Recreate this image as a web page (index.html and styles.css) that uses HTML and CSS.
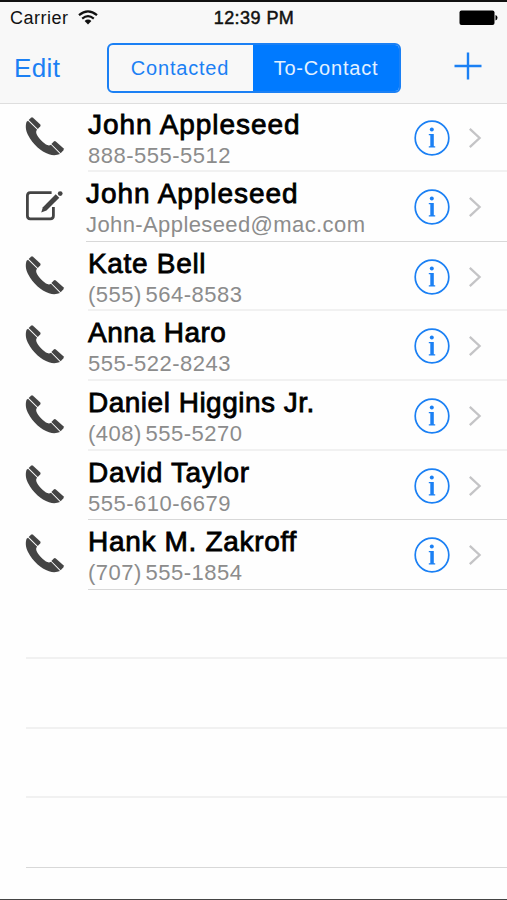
FILE: index.html
```html
<!DOCTYPE html>
<html lang="en">
<head>
<meta charset="utf-8">
<title>To-Contact</title>
<link rel="stylesheet" href="styles.css">
</head>
<body>
<svg width="0" height="0" class="defs" aria-hidden="true">
  <symbol id="phone" viewBox="0 0 40 40">
    <path d="M1.6 5.8C.4 9 .4 14 3 19C8 28.5 16 35.5 24 38.3C28 39.6 32 39.3 35 38L26 28.8C23.5 30.3 20.8 28.8 17.8 26.1C14.4 22.8 11.4 19.2 11.2 16.6C11.1 15 11.5 14.4 12.2 13.7L3 4.7Z"/>
    <path d="M3.7 3.9L6 1.7Q7 .9 8 1.7L15.3 8.4Q16 9.2 15.3 10.2L12.8 13Z"/>
    <path d="M26.4 28L28.8 25.4Q29.8 24.6 30.8 25.4L38.4 32.3Q39.2 33.3 38.4 34.3L35.7 37.2Z"/>
  </symbol>
  <symbol id="compose" viewBox="0 0 40 40">
    <path d="M26.6 7.6H5.2Q2.4 7.6 2.4 10.6V30.8Q2.4 33.8 5.2 33.8H25.4Q28.4 33.8 28.4 30.8V22" fill="none" stroke="#444" stroke-width="2.8"/>
    <path d="M17.9 22.2L30.7 9.2L34.3 12.8L21.5 25.6L16.2 27.6Z"/>
    <circle cx="35.2" cy="8.6" r="2.4"/>
  </symbol>
  <symbol id="info" viewBox="0 0 36 36">
    <circle cx="18" cy="18" r="16.8" fill="none" stroke="#1b80f4" stroke-width="1.7"/>
    <circle cx="17.8" cy="9.6" r="2" fill="#1b80f4"/>
    <path d="M14.8 14H19.8V26.2H21.2V27.4H14.8V26.2H16.3V15.3H14.8Z" fill="#1b80f4"/>
  </symbol>
  <symbol id="chevron" viewBox="0 0 14 22">
    <path d="M1.8 1.8L11.6 11L1.8 20.2" fill="none" stroke="#c4c4c6" stroke-width="2.3"/>
  </symbol>
</svg>
<div class="screen">
  <header class="top">
    <div class="status">
      <div class="carrier"><span>Carrier</span>
        <svg class="wifi" width="20" height="16" viewBox="0 0 20 16"><g fill="none" stroke="#111" stroke-width="2.2"><path d="M1 5.2Q10-2.6 19 5.2"/><path d="M4.2 8.6Q10 3.8 15.8 8.6"/></g><path d="M6.6 11Q10 8.2 13.4 11L10 14.6Z" fill="#111"/></svg>
      </div>
      <div class="time">12:39 PM</div>
      <svg class="battery" width="39" height="16" viewBox="0 0 39 16"><rect x=".5" y=".5" width="35" height="14.5" rx="2"/><path d="M36.5 5Q38.5 5.5 38.5 7.8T36.5 10.6Z"/></svg>
    </div>
    <nav class="nav">
      <span class="edit">Edit</span>
      <div class="segments"><span class="seg">Contacted</span><span class="seg active">To-Contact</span></div>
      <svg class="plus" width="28" height="28" viewBox="0 0 28 28"><path d="M14 .5V27.5M.5 14H27.5" stroke="#1b80f4" stroke-width="2.4"/></svg>
    </nav>
  </header>
  <main class="list">
    <div class="row soft"><svg class="kind"><use href="#phone"/></svg><div class="body"><div class="text"><div class="name wide">John Appleseed</div><div class="detail">888-555-5512</div></div><svg class="info"><use href="#info"/></svg><svg class="chevron"><use href="#chevron"/></svg></div></div>
    <div class="row mail"><svg class="kind"><use href="#compose"/></svg><div class="body"><div class="text"><div class="name wide">John Appleseed</div><div class="detail">John-Appleseed@mac.com</div></div><svg class="info"><use href="#info"/></svg><svg class="chevron"><use href="#chevron"/></svg></div></div>
    <div class="row soft"><svg class="kind"><use href="#phone"/></svg><div class="body"><div class="text"><div class="name">Kate Bell</div><div class="detail">(555) 564-8583</div></div><svg class="info"><use href="#info"/></svg><svg class="chevron"><use href="#chevron"/></svg></div></div>
    <div class="row soft"><svg class="kind"><use href="#phone"/></svg><div class="body"><div class="text"><div class="name tight">Anna Haro</div><div class="detail">555-522-8243</div></div><svg class="info"><use href="#info"/></svg><svg class="chevron"><use href="#chevron"/></svg></div></div>
    <div class="row soft"><svg class="kind"><use href="#phone"/></svg><div class="body"><div class="text"><div class="name tight">Daniel Higgins Jr.</div><div class="detail">(408) 555-5270</div></div><svg class="info"><use href="#info"/></svg><svg class="chevron"><use href="#chevron"/></svg></div></div>
    <div class="row"><svg class="kind"><use href="#phone"/></svg><div class="body"><div class="text"><div class="name">David Taylor</div><div class="detail">555-610-6679</div></div><svg class="info"><use href="#info"/></svg><svg class="chevron"><use href="#chevron"/></svg></div></div>
    <div class="row"><svg class="kind"><use href="#phone"/></svg><div class="body"><div class="text"><div class="name">Hank M. Zakroff</div><div class="detail">(707) 555-1854</div></div><svg class="info"><use href="#info"/></svg><svg class="chevron"><use href="#chevron"/></svg></div></div>
    <div class="row soft"><div class="body"></div></div>
    <div class="row soft"><div class="body"></div></div>
    <div class="row soft"><div class="body"></div></div>
    <div class="row"><div class="body"></div></div>
  </main>
</div>
</body>
</html>
```
FILE: styles.css
```css
* { box-sizing: border-box; }
body { margin: 0; background: #fff; font-family: "Liberation Sans", Arial, sans-serif; }
svg { display: block; flex: none; }
.defs { display: none; }
.screen { height: 900px; overflow: hidden; border-top: 2px solid #111; border-bottom: 1px solid #444; background: #fefefe; }
.top { height: 102px; background: #f8f8f8; border-bottom: 1px solid #dedede; }
.status { height: 32px; display: grid; grid-template-columns: 1fr auto 1fr; align-items: center; padding: 0 9px 0 10px; font-size: 18px; color: #111; }
.carrier { display: flex; align-items: center; gap: 9px; letter-spacing: .5px; }
.time { letter-spacing: .45px; -webkit-text-stroke: .5px #111; }
.battery { justify-self: end; fill: #000; }
.nav { height: 69px; display: flex; align-items: flex-start; padding: 9px 25px 0 13px; color: #1b80f4; }
.edit { width: 94px; padding-left: 1px; font-size: 26px; line-height: 50px; letter-spacing: .4px; }
.segments { width: 294px; height: 50px; display: flex; border: 2px solid #1b80f4; border-radius: 6px; overflow: hidden; font-size: 20px; letter-spacing: .8px; line-height: 47px; text-align: center; }
.seg { width: 144px; padding-right: 2px; }
.active { flex: 1; background: #007aff; color: #e3f1ff; padding-right: 0; }
.plus { margin: 9px 0 0 auto; }
.list { height: 797px; margin-top: -1.2px; }
.row { height: 69.55px; display: flex; padding-left: 26px; }
.kind { width: 40px; height: 40px; margin: 13px 23px 0 -1px; fill: #444; }
.body { flex: 1; display: flex; border-bottom: 1px solid #d8d8d8; }
.soft .body { border-bottom: 2px solid #f1f1f1; }
.text { flex: 1; padding-top: 6px; white-space: nowrap; }
.name { font-size: 28px; line-height: 32px; letter-spacing: .68px; color: #000; -webkit-text-stroke: .8px #000; }
.wide { letter-spacing: .94px; }
.tight { letter-spacing: .5px; }
.detail { padding-top: 1px; font-size: 22px; line-height: 28px; letter-spacing: .5px; word-spacing: -3px; color: #8c8c8c; }
.mail .kind { margin-right: 21px; }
.mail .detail { letter-spacing: .4px; }
.info { width: 36px; height: 36px; margin: 17px 18px 0 0; }
.chevron { width: 14px; height: 22px; margin: 24px 25px 0 0; }
```
